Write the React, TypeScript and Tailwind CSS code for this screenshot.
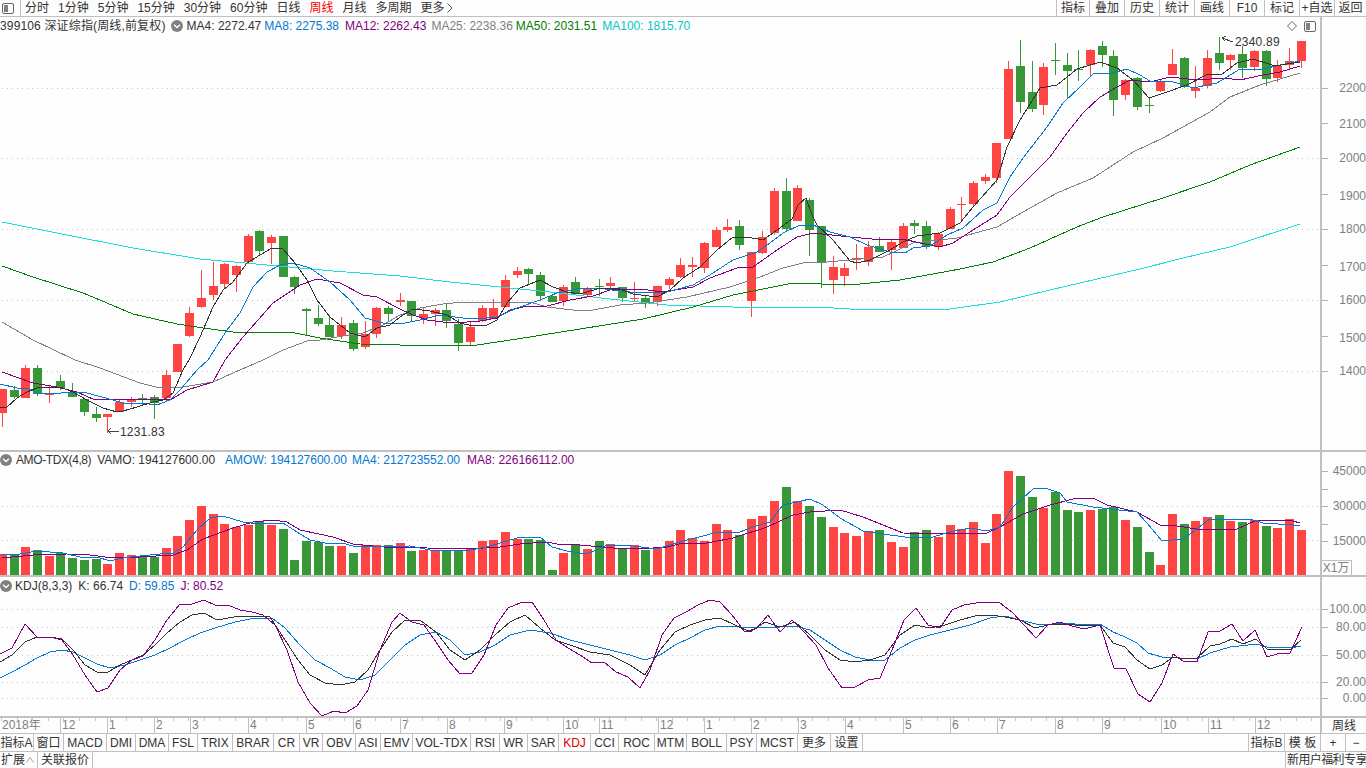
import { ReactNode } from "react";

type Pt = [number, number];
// red(1)/green(0), body top, body bottom, high, low, volume top
type Candle = [number, number, number, number, number, number];

const RED = "#ff4444";
const GREEN = "#389838";
const LINE_BLACK = "#333333";
const LINE_BLUE = "#0078d4";
const LINE_PURPLE = "#800080";
const LINE_GRAY = "#808080";
const LINE_GREEN = "#008000";
const LINE_CYAN = "#1cdcdc";

const candles: Candle[] = [
  [1, 389, 413, 389, 427, 554], [0, 390, 397, 386, 399, 554], [1, 368, 398, 365, 398, 547], [0, 368, 394, 365, 396, 550],
  [1, 393, 395, 385, 403, 556], [0, 381, 388, 375, 390, 553], [0, 392, 397, 383, 397, 558], [0, 399, 412, 399, 416, 560],
  [0, 414, 418, 407, 422, 559], [1, 414, 417, 414, 433, 564], [1, 402, 412, 400, 412, 553], [1, 399, 402, 397, 407, 555],
  [0, 398, 400, 394, 405, 556], [0, 397, 403, 395, 419, 557], [1, 375, 398, 370, 401, 548], [1, 344, 372, 344, 372, 536],
  [1, 313, 336, 307, 337, 520], [1, 298, 307, 270, 308, 506], [1, 286, 295, 262, 300, 514], [1, 264, 284, 263, 289, 524],
  [1, 266, 275, 265, 292, 527], [1, 236, 262, 234, 262, 525], [0, 231, 251, 230, 255, 521], [1, 237, 243, 235, 264, 525],
  [0, 236, 277, 236, 277, 529], [0, 277, 287, 276, 294, 560], [0, 309, 311, 308, 335, 541], [0, 318, 324, 305, 326, 542],
  [0, 325, 337, 315, 337, 546], [1, 325, 336, 317, 339, 546], [0, 323, 349, 320, 351, 553], [1, 334, 347, 321, 349, 545],
  [1, 308, 334, 307, 338, 545], [0, 308, 314, 306, 321, 545], [1, 300, 302, 293, 306, 543], [0, 301, 316, 301, 321, 551],
  [1, 314, 318, 307, 324, 550], [1, 310, 314, 308, 326, 551], [0, 310, 321, 303, 328, 551], [0, 324, 343, 319, 351, 550],
  [1, 327, 342, 322, 345, 549], [1, 308, 321, 305, 322, 541], [1, 308, 319, 299, 319, 540], [1, 280, 307, 275, 307, 532],
  [1, 271, 275, 267, 278, 539], [0, 269, 274, 268, 284, 539], [0, 275, 296, 272, 301, 540], [0, 296, 302, 294, 302, 570],
  [1, 287, 301, 285, 306, 553], [0, 282, 294, 277, 294, 544], [1, 289, 295, 287, 297, 549], [0, 286, 287, 279, 296, 541],
  [1, 283, 286, 277, 290, 544], [0, 287, 298, 287, 302, 549], [1, 298, 299, 282, 301, 545], [0, 298, 302, 296, 308, 550],
  [1, 286, 302, 286, 306, 548], [1, 279, 285, 277, 289, 541], [1, 265, 277, 258, 278, 530], [1, 265, 267, 257, 277, 538],
  [1, 243, 268, 242, 273, 541], [1, 230, 247, 227, 247, 524], [1, 227, 230, 219, 232, 530], [0, 226, 245, 220, 250, 535],
  [1, 252, 301, 252, 317, 519], [1, 237, 253, 231, 254, 516], [1, 191, 233, 188, 235, 501], [0, 191, 229, 178, 232, 487],
  [1, 188, 221, 185, 221, 501], [0, 200, 230, 198, 256, 506], [0, 226, 263, 226, 288, 517], [1, 267, 280, 256, 294, 527],
  [1, 268, 276, 263, 286, 533], [1, 258, 259, 244, 270, 536], [1, 247, 262, 241, 266, 531], [0, 246, 252, 237, 252, 530],
  [1, 242, 250, 240, 270, 542], [1, 226, 248, 223, 248, 547], [0, 223, 226, 220, 234, 532], [0, 226, 246, 221, 249, 530],
  [1, 234, 247, 232, 250, 537], [1, 209, 229, 207, 229, 525], [1, 204, 205, 197, 220, 529], [1, 183, 204, 181, 206, 522],
  [1, 177, 181, 174, 184, 543], [1, 143, 178, 143, 183, 514], [1, 69, 139, 61, 139, 471], [0, 66, 102, 40, 113, 476],
  [0, 92, 109, 61, 112, 497], [1, 67, 105, 63, 115, 508], [0, 60, 61, 43, 75, 492], [0, 65, 71, 53, 98, 510],
  [0, 69, 70, 50, 81, 512], [1, 50, 65, 49, 76, 510], [0, 46, 55, 41, 67, 509], [0, 56, 100, 50, 116, 507],
  [1, 80, 95, 79, 100, 520], [0, 78, 107, 77, 110, 527], [0, 105, 106, 98, 113, 552], [1, 81, 91, 80, 92, 565],
  [1, 64, 75, 49, 75, 514], [0, 58, 87, 57, 88, 524], [1, 88, 91, 66, 98, 521], [1, 58, 86, 50, 88, 517],
  [0, 53, 63, 37, 70, 515], [1, 55, 60, 54, 70, 521], [0, 54, 68, 46, 78, 522], [1, 51, 67, 50, 71, 520],
  [0, 51, 79, 50, 86, 526], [1, 66, 78, 60, 82, 528], [1, 61, 65, 48, 70, 519], [1, 41, 61, 41, 68, 530],
];

const ma4: Pt[] = [
  [0, 408], [7, 407], [17, 398], [27, 392], [37, 388], [50, 387], [60, 387], [73, 392], [87, 400], [103, 408], [117, 412], [123, 411], [137, 407], [153, 402], [163, 400], [173, 393], [183, 370], [189, 360],
  [200, 337], [213, 307], [223, 290], [233, 282], [247, 263], [260, 255], [272, 248], [283, 249], [295, 263], [307, 280], [317, 300], [330, 317], [350, 333], [365, 337], [377, 328], [390, 325], [400, 317],
  [413, 309], [430, 311], [447, 315], [460, 323], [473, 326], [487, 325], [497, 320], [507, 303], [520, 288], [540, 280], [553, 287], [567, 292], [580, 294], [597, 289], [617, 288], [633, 294], [657, 297], [670, 290], [683, 278], [700, 267], [717, 250], [733, 237], [747, 237], [763, 240], [777, 230], [792, 219], [798, 205], [806, 198], [812, 215], [817, 225], [833, 240], [850, 261],
  [857, 263], [870, 260], [890, 250], [903, 242], [917, 236], [940, 233], [960, 223], [973, 207], [997, 180], [1007, 147], [1020, 120], [1040, 88], [1057, 85], [1077, 69], [1100, 62], [1117, 68], [1133, 80], [1149, 98], [1167, 92], [1187, 85], [1208, 74], [1222, 74], [1237, 63], [1253, 59], [1275, 66], [1300, 62],
];
const ma8: Pt[] = [
  [0, 384], [17, 388], [28, 388], [37, 393], [50, 394], [73, 392], [87, 393], [113, 400], [123, 403], [140, 403], [157, 405], [170, 400], [180, 390], [197, 370], [208, 360], [227, 330], [240, 313], [253, 287], [267, 272], [280, 265], [293, 263], [310, 268], [330, 282], [350, 300], [365, 318], [383, 323], [400, 324],
  [420, 320], [440, 315], [463, 318], [478, 319], [497, 317], [517, 308], [540, 300], [557, 293], [577, 289], [597, 288], [620, 291], [640, 293], [667, 292], [693, 285], [713, 273], [733, 260], [757, 252], [770, 243], [783, 233], [800, 225], [813, 225], [830, 232], [850, 237],
  [867, 245], [890, 252], [905, 253], [913, 248], [930, 246], [947, 235], [963, 228], [983, 210], [997, 203], [1010, 177], [1023, 158], [1047, 127], [1063, 103], [1080, 87], [1093, 74], [1113, 73], [1127, 69], [1140, 75], [1150, 81], [1170, 81], [1193, 88], [1217, 83], [1240, 69], [1263, 69], [1280, 65], [1300, 61],
];
const ma12: Pt[] = [
  [2, 372], [33, 383], [57, 387], [77, 392], [95, 400], [127, 399], [157, 399], [170, 400], [187, 390], [213, 382], [225, 360], [243, 337], [273, 303], [300, 285], [317, 279], [340, 283], [363, 295], [377, 297], [400, 309],
  [413, 315], [427, 320], [443, 322], [467, 322], [480, 321], [497, 318], [510, 310], [527, 306], [547, 306], [570, 300], [593, 296], [613, 289], [640, 289], [663, 292], [693, 287], [710, 278], [737, 268], [753, 267], [777, 250], [797, 237], [813, 233], [850, 237],
  [883, 240], [903, 239], [920, 243], [940, 247], [953, 243], [973, 230], [997, 215], [1010, 197], [1027, 180], [1050, 157], [1067, 133], [1083, 113], [1100, 97], [1117, 87], [1130, 80], [1150, 82], [1170, 77], [1197, 80], [1223, 78], [1240, 80], [1263, 75], [1280, 72], [1300, 66],
];
const ma25: Pt[] = [
  [2, 322], [33, 340], [75, 360], [100, 368], [140, 383], [160, 388], [183, 387], [213, 382], [233, 373], [263, 360], [283, 350], [307, 341], [320, 340], [337, 337], [363, 333], [383, 325], [400, 315],
  [420, 308], [443, 304], [463, 302], [530, 302], [547, 307], [573, 310], [593, 310], [620, 305], [647, 303], [667, 300], [687, 297], [730, 287], [760, 277], [783, 268], [803, 263], [827, 262], [850, 260],
  [883, 257], [913, 243], [957, 238], [997, 227], [1023, 212], [1057, 193], [1093, 178], [1133, 152], [1163, 138], [1210, 112], [1230, 97], [1260, 85], [1300, 73],
];
const ma50: Pt[] = [
  [2, 266], [33, 277], [83, 293], [107, 303], [133, 314], [177, 324], [203, 328], [233, 332], [290, 332], [320, 338], [360, 344], [400, 345], [477, 345], [517, 339], [580, 329], [643, 319], [693, 307], [733, 295], [793, 283], [850, 285], [900, 280], [960, 269], [993, 262], [1030, 248], [1077, 227], [1103, 217], [1163, 198], [1210, 182], [1250, 165], [1300, 147],
];
const ma100: Pt[] = [
  [2, 222], [67, 235], [133, 248], [200, 259], [267, 265], [333, 271], [400, 276], [450, 282], [500, 287], [550, 292], [610, 299], [667, 305], [733, 307], [817, 307], [850, 309], [950, 309], [1000, 302], [1050, 290], [1140, 269], [1183, 258], [1230, 247], [1300, 224],
];

const volBlue: Pt[] = [
  [2, 555], [20, 554], [37, 551], [63, 553], [80, 557], [97, 557], [110, 561], [123, 558], [140, 556], [160, 554], [173, 553], [183, 547], [197, 530], [210, 518], [223, 516], [243, 522], [260, 524], [283, 523], [297, 532], [310, 540], [330, 544], [342, 543], [353, 546], [367, 547], [410, 546], [430, 550], [453, 551], [470, 550], [487, 547], [500, 543],
  [517, 538], [540, 537], [552, 547], [567, 551], [587, 554], [607, 545], [633, 546], [657, 549], [683, 541], [707, 535], [713, 533], [740, 532], [753, 527], [770, 522], [783, 505], [810, 499], [823, 505], [840, 518], [863, 531], [890, 535], [913, 538], [933, 537], [950, 532],
  [970, 528], [987, 531], [1000, 527], [1013, 507], [1033, 489], [1045, 488], [1060, 493], [1067, 502], [1093, 507], [1137, 512], [1147, 523], [1162, 541], [1183, 539], [1210, 519], [1250, 519], [1263, 523], [1293, 525], [1300, 526],
];
const volPurple: Pt[] = [
  [2, 558], [33, 555], [67, 554], [90, 555], [113, 558], [140, 557], [173, 555], [187, 550], [203, 539], [233, 528], [253, 522], [273, 520], [287, 522], [300, 530], [333, 537], [353, 544], [383, 547], [427, 548], [467, 549], [500, 547],
  [520, 544], [547, 542], [557, 544], [580, 545], [613, 548], [640, 549], [667, 547], [683, 543], [707, 543], [733, 538], [767, 527], [793, 515], [810, 512], [840, 510], [863, 517], [903, 533], [950, 534],
  [987, 533], [1000, 527], [1023, 514], [1050, 505], [1077, 498], [1093, 498], [1107, 505], [1137, 512], [1160, 525], [1177, 526], [1203, 530], [1237, 529], [1257, 520], [1293, 521], [1300, 523],
];

const kdjJ: Pt[] = [
  [0, 654], [12, 648], [25, 624], [37, 637], [50, 637], [62, 640], [73, 655], [85, 675], [97, 692], [108, 688], [120, 670], [132, 660], [143, 656], [155, 640], [167, 620], [180, 604], [192, 604], [204, 600], [217, 606], [228, 605], [240, 610], [252, 612], [263, 615], [275, 625], [287, 650], [298, 682], [310, 703], [322, 716], [334, 711], [345, 713], [357, 706], [368, 690], [380, 650], [392, 622], [400, 613], [412, 622], [424, 625], [436, 642], [448, 660], [460, 674], [472, 673], [484, 655], [496, 625], [508, 608], [520, 603], [532, 602], [544, 620], [556, 640], [568, 648], [580, 655], [592, 663], [604, 662], [616, 672], [628, 677], [640, 688], [650, 670], [662, 635], [674, 618], [686, 612], [698, 605], [710, 600], [720, 602], [732, 615], [745, 632], [757, 628], [768, 615], [780, 632], [792, 620], [804, 632], [816, 645], [828, 668], [842, 688], [855, 687], [868, 680], [880, 678], [892, 650], [904, 620], [916, 608], [928, 625], [940, 628], [952, 610], [964, 605], [976, 603], [988, 602], [1000, 603], [1012, 612], [1024, 625], [1036, 638], [1048, 625], [1060, 622], [1072, 626], [1084, 629], [1100, 625],
  [1114, 668], [1126, 669], [1138, 694], [1150, 702], [1162, 683], [1173, 654], [1183, 661], [1197, 662], [1208, 632], [1220, 631], [1232, 624], [1243, 641], [1255, 630], [1267, 657], [1277, 654], [1290, 653], [1302, 627],
];
const kdjK: Pt[] = [
  [0, 662], [12, 655], [25, 642], [37, 637], [50, 637], [62, 639], [73, 650], [85, 665], [97, 672], [108, 672], [120, 665], [132, 660], [143, 655], [155, 645], [167, 633], [180, 622], [192, 615], [204, 613], [217, 620], [240, 616], [270, 617], [285, 640], [298, 660], [310, 675], [325, 683], [340, 685], [355, 682], [368, 670], [380, 650], [392, 632], [405, 620], [420, 620], [436, 632], [450, 650], [465, 660], [480, 650], [495, 635], [510, 622], [525, 615], [540, 628], [555, 640], [570, 645], [590, 652], [610, 655], [630, 665], [645, 675], [660, 650], [675, 632], [690, 625], [705, 620], [720, 618], [735, 625], [750, 632], [765, 622], [780, 627], [795, 622], [810, 635], [825, 650], [840, 660], [855, 662], [870, 660], [885, 655], [900, 635], [915, 625], [930, 628], [945, 625], [960, 620], [975, 616], [990, 615], [1005, 617], [1020, 620], [1035, 628], [1048, 625], [1065, 624], [1085, 626], [1100, 625],
  [1113, 643], [1125, 647], [1137, 660], [1150, 669], [1162, 665], [1173, 657], [1183, 659], [1197, 658], [1210, 646], [1220, 644], [1232, 639], [1243, 644], [1256, 639], [1267, 649], [1290, 650], [1301, 640],
];
const kdjD: Pt[] = [
  [0, 678], [12, 672], [25, 665], [37, 658], [50, 652], [62, 650], [73, 652], [85, 658], [97, 664], [110, 668], [125, 665], [140, 660], [155, 655], [170, 648], [185, 640], [200, 633], [215, 628], [235, 622], [255, 618], [272, 618], [285, 628], [300, 645], [315, 660], [330, 668], [345, 677], [360, 680], [375, 675], [390, 660], [405, 645], [420, 635], [436, 632], [450, 640], [465, 655], [480, 652], [495, 645], [510, 635], [530, 630], [550, 633], [570, 640], [590, 645], [610, 650], [630, 655], [645, 660], [660, 655], [675, 645], [690, 638], [705, 630], [720, 626], [740, 627], [760, 627], [780, 627], [795, 626], [810, 630], [825, 640], [840, 650], [855, 657], [870, 660], [885, 660], [900, 648], [915, 640], [930, 635], [950, 630], [970, 625], [990, 618], [1005, 616], [1020, 620], [1040, 625], [1065, 623], [1085, 625], [1100, 624],
  [1113, 632], [1125, 637], [1137, 643], [1148, 653], [1162, 657], [1197, 659], [1210, 653], [1230, 647], [1257, 644], [1267, 647], [1290, 648], [1301, 646],
];

const mainGrid = [88, 158, 229, 300, 371];
const mainAxis = [
  { label: "2200", y: 88, tick: 88 }, { label: "2100", y: 124, tick: 123 }, { label: "2000", y: 158, tick: 158 },
  { label: "1900", y: 196, tick: 194 }, { label: "1800", y: 229, tick: 229 }, { label: "1700", y: 267, tick: 265 },
  { label: "1600", y: 300, tick: 300 }, { label: "1500", y: 338, tick: 336 }, { label: "1400", y: 371, tick: 371 },
];
const volAxis = [
  { label: "45000", y: 471, tick: 471 }, { label: "", y: 489, tick: 489 }, { label: "30000", y: 506, tick: 506 },
  { label: "", y: 524, tick: 524 }, { label: "15000", y: 541, tick: 541 },
];
const kdjAxis = [
  { label: "100.00", y: 609, tick: 609 }, { label: "80.00", y: 627, tick: 627 }, { label: "50.00", y: 655, tick: 655 },
  { label: "20.00", y: 682, tick: 682 }, { label: "0.00", y: 698, tick: 698 },
];

const periods = ["分时", "1分钟", "5分钟", "15分钟", "30分钟", "60分钟", "日线", "周线", "月线", "多周期"];
const rightTools = [
  { label: "指标", w: "w-[33px]" }, { label: "叠加", w: "w-[35px]" }, { label: "历史", w: "w-[35px]" }, { label: "统计", w: "w-[35px]" },
  { label: "画线", w: "w-[35px]" }, { label: "F10", w: "w-[35px]" }, { label: "标记", w: "w-[35px]" }, { label: "+自选", w: "w-[35px]" }, { label: "返回", w: "w-[32px]" },
];
const tabs = [
  { label: "指标A", w: "w-[34px]" }, { label: "窗口", w: "w-[30px]" }, { label: "MACD", w: "w-[43px]" }, { label: "DMI", w: "w-[29px]" },
  { label: "DMA", w: "w-[33px]" }, { label: "FSL", w: "w-[29px]" }, { label: "TRIX", w: "w-[35px]" }, { label: "BRAR", w: "w-[41px]" },
  { label: "CR", w: "w-[26px]" }, { label: "VR", w: "w-[23px]" }, { label: "OBV", w: "w-[33px]" }, { label: "ASI", w: "w-[25px]" },
  { label: "EMV", w: "w-[32px]" }, { label: "VOL-TDX", w: "w-[58px]" }, { label: "RSI", w: "w-[29px]" }, { label: "WR", w: "w-[28px]" },
  { label: "SAR", w: "w-[31px]" }, { label: "KDJ", w: "w-[32px]" }, { label: "CCI", w: "w-[28px]" }, { label: "ROC", w: "w-[36px]" },
  { label: "MTM", w: "w-[32px]" }, { label: "BOLL", w: "w-[40px]" }, { label: "PSY", w: "w-[30px]" }, { label: "MCST", w: "w-[41px]" },
  { label: "更多", w: "w-[33px]" }, { label: "设置", w: "w-[32px]" },
];
const months = [
  { label: "2018年", x: 0 }, { label: "12", x: 60 }, { label: "1", x: 107 }, { label: "2", x: 154 }, { label: "3", x: 190 }, { label: "4", x: 248 },
  { label: "5", x: 306 }, { label: "6", x: 353 }, { label: "7", x: 400 }, { label: "8", x: 447 }, { label: "9", x: 504 }, { label: "10", x: 563 },
  { label: "11", x: 599 }, { label: "12", x: 658 }, { label: "1", x: 704 }, { label: "2", x: 751 }, { label: "3", x: 798 }, { label: "4", x: 845 },
  { label: "5", x: 903 }, { label: "6", x: 950 }, { label: "7", x: 997 }, { label: "8", x: 1055 }, { label: "9", x: 1102 }, { label: "10", x: 1161 },
  { label: "11", x: 1208 }, { label: "12", x: 1255 }, { label: "", x: 1320 },
];

const candleLeft = (i: number) => Math.floor(11.7 * i - 1.6);
const toPoints = (pts: Pt[]) => pts.map((p) => p.join(",")).join(" ");

function Curve({ pts, color }: { pts: Pt[]; color: string }) {
  return <polyline points={toPoints(pts)} fill="none" stroke={color} strokeWidth={1} />;
}

function GridLine({ y }: { y: number }) {
  return <line x1={2} x2={1320} y1={y + 0.5} y2={y + 0.5} stroke="#c4c4c4" strokeDasharray="1 4" />;
}

function CircleChevron() {
  return (
    <svg viewBox="0 0 12 12" className="h-3 w-3 shrink-0">
      <circle cx="6" cy="6" r="6" fill="#808080" />
      <path d="M3 4.8 L6 7.6 L9 4.8" fill="none" stroke="#fff" strokeWidth="1.4" />
    </svg>
  );
}

function PanelIcon({ className }: { className: string }) {
  return (
    <svg viewBox="0 0 12 11" className={className}>
      <rect x="0.5" y="0.5" width="11" height="10" rx="1.5" fill="#fdfdfd" stroke="#666" />
      <rect x="2" y="2" width="4" height="7" fill="#808080" />
    </svg>
  );
}

function Axis({ items, offset }: { items: { label: string; y: number; tick: number }[]; offset: number }) {
  return (
    <div className="relative w-[46px] shrink-0 border-l-2 border-[#c0c0c0]">
      {items.map((a) => (
        <div key={a.tick}>
          <div className="absolute left-0 h-px w-[6px] bg-[#b0b0b0]" style={{ top: a.tick - offset }} />
          {a.label && (
            <span className="absolute right-0 text-[12px] leading-[14px] text-[#808080]" style={{ top: a.y - offset - 7 }}>
              {a.label}
            </span>
          )}
        </div>
      ))}
    </div>
  );
}

function ValueRow({ children, className }: { children: ReactNode; className: string }) {
  return <div className={`relative flex h-[18px] items-center whitespace-nowrap text-[12px] ${className}`}>{children}</div>;
}

function ChartSvg({ top, height, children }: { top: number; height: number; children: ReactNode }) {
  return (
    <svg viewBox={`0 ${top} 1320 ${height}`} shapeRendering="crispEdges" className="absolute left-0 top-0 block h-full w-full">
      {children}
    </svg>
  );
}

export default function App() {
  return (
    <div className="flex h-[768px] w-[1366px] flex-col overflow-hidden bg-[#fdfdfd] font-['Liberation_Sans','Noto_Sans_CJK_SC',sans-serif] text-[12px] text-[#333]">
      {/* Top toolbar */}
      <div className="flex h-[17px] shrink-0 items-stretch justify-between border-b border-[#c0c0c0]">
        <div className="flex items-stretch">
          <div className="flex w-[21px] items-center border-r border-[#c0c0c0] pl-[2px]">
            <PanelIcon className="h-[11px] w-[12px]" />
          </div>
          <div className="flex items-center gap-[9px] pl-[4px]">
            {periods.map((p) => (
              <span key={p} className={p === "周线" ? "text-[#ff0000]" : ""}>
                {p}
              </span>
            ))}
            <span className="flex items-center gap-[2px]">
              更多
              <svg viewBox="0 0 6 10" className="h-[10px] w-[6px]">
                <path d="M0.5 0.5 L5 5 L0.5 9.5" fill="none" stroke="#555" />
              </svg>
            </span>
          </div>
        </div>
        <div className="flex items-stretch">
          {rightTools.map((t) => (
            <div key={t.label} className={`flex items-center justify-center border-l border-[#c0c0c0] ${t.w}`}>
              {t.label}
            </div>
          ))}
        </div>
      </div>

      {/* Price panel */}
      <div className="flex h-[435px] shrink-0 border-b-2 border-[#c0c0c0]">
        <div className="relative w-[1320px] shrink-0">
          <ChartSvg top={17} height={433}>
            {mainGrid.map((y) => (
              <GridLine key={y} y={y} />
            ))}
            {candles.map((c, i) => {
              const left = candleLeft(i);
              const color = c[0] ? RED : GREEN;
              return (
                <g key={i} fill={color}>
                  <rect x={left + 4} y={c[3]} width={1} height={c[4] - c[3]} />
                  <rect x={left} y={c[1]} width={9} height={c[2] - c[1]} />
                </g>
              );
            })}
            <Curve pts={ma100} color={LINE_CYAN} />
            <Curve pts={ma50} color={LINE_GREEN} />
            <Curve pts={ma25} color={LINE_GRAY} />
            <Curve pts={ma12} color={LINE_PURPLE} />
            <Curve pts={ma8} color={LINE_BLUE} />
            <Curve pts={ma4} color={LINE_BLACK} />
            <path d="M1233 42 L1222 38 M1222 38 L1226 36 M1222 38 L1225 41" fill="none" stroke="#444" />
            <path d="M119 431 L108 431 M108 431 L111 428 M108 431 L111 434" fill="none" stroke="#444" />
          </ChartSvg>
          <ValueRow className="gap-[6px]">
            <span className="tracking-[0.15px]">399106 深证综指(周线,前复权)</span>
            <span className="-ml-[1px]">
              <CircleChevron />
            </span>
            <span className="-ml-[2px]">MA4: 2272.47</span>
            <span className="-ml-[3px] text-[#0078d4]">MA8: 2275.38</span>
            <span className="text-[#800080]">MA12: 2262.43</span>
            <span className="-ml-[1px] text-[#808080]">MA25: 2238.36</span>
            <span className="-ml-[3px] text-[#008000]">MA50: 2031.51</span>
            <span className="-ml-[1px] text-[#00c8c8]">MA100: 1815.70</span>
          </ValueRow>
          <svg viewBox="0 0 10 10" className="absolute right-[23px] top-[4px] h-[10px] w-[10px]">
            <path d="M5 0.5 L9.5 5 L5 9.5 L0.5 5 Z" fill="none" stroke="#666" />
          </svg>
          <PanelIcon className="absolute right-[4px] top-[4px] h-[11px] w-[12px]" />
          <span className="absolute left-[1235px] top-[18px] text-[12px] leading-[14px] tracking-[0.2px]">2340.89</span>
          <span className="absolute left-[120px] top-[408px] text-[12px] leading-[14px] tracking-[0.2px]">1231.83</span>
        </div>
        <Axis items={mainAxis} offset={17} />
      </div>

      {/* Amount panel */}
      <div className="flex h-[125px] shrink-0 border-b-2 border-[#c0c0c0]">
        <div className="relative w-[1320px] shrink-0">
          <ChartSvg top={452} height={123}>
            <GridLine y={506} />
            <GridLine y={540} />
            {candles.map((c, i) => (
              <rect key={i} x={candleLeft(i)} y={c[5]} width={9} height={576 - c[5]} fill={c[0] ? RED : GREEN} />
            ))}
            <Curve pts={volPurple} color={LINE_PURPLE} />
            <Curve pts={volBlue} color={LINE_BLUE} />
          </ChartSvg>
          <ValueRow className="-mt-[1px] gap-[5px]">
            <CircleChevron />
            <span className="-ml-[1px] tracking-[-0.4px]">AMO-TDX(4,8)</span>
            <span className="ml-[1px]">VAMO: 194127600.00</span>
            <span className="ml-[5px] text-[#0078d4]">AMOW: 194127600.00</span>
            <span className="text-[#0078d4]">MA4: 212723552.00</span>
            <span className="ml-[2px] text-[#800080]">MA8: 226166112.00</span>
          </ValueRow>
        </div>
        <div className="relative flex w-[46px] shrink-0">
          <Axis items={volAxis} offset={452} />
          <div className="absolute bottom-0 left-[1px] flex h-[15px] w-[31px] items-center justify-center border-r border-t border-[#c0c0c0] text-[#808080]">
            X1万
          </div>
        </div>
      </div>

      {/* KDJ panel */}
      <div className="flex h-[141px] shrink-0 border-b-2 border-[#c0c0c0]">
        <div className="relative w-[1320px] shrink-0">
          <ChartSvg top={577} height={139}>
            {[609, 627, 655, 682, 698].map((y) => (
              <GridLine key={y} y={y} />
            ))}
            <Curve pts={kdjD} color={LINE_BLUE} />
            <Curve pts={kdjK} color={LINE_BLACK} />
            <Curve pts={kdjJ} color={LINE_PURPLE} />
          </ChartSvg>
          <ValueRow className="gap-[6px]">
            <CircleChevron />
            <span className="-ml-[3px]">KDJ(8,3,3)</span>
            <span>K: 66.74</span>
            <span className="text-[#0078d4]">D: 59.85</span>
            <span className="text-[#800080]">J: 80.52</span>
          </ValueRow>
        </div>
        <Axis items={kdjAxis} offset={577} />
      </div>

      {/* Date axis */}
      <div className="flex h-[16px] shrink-0 border-b border-[#c0c0c0]">
        <div className="relative flex w-[1320px] shrink-0 text-[#808080]">
          {months.slice(0, -1).map((m, i) => (
            <div
              key={m.x}
              className={`h-full overflow-hidden pl-[1px] leading-[15px] ${i > 0 ? "border-l border-[#c0c0c0]" : "pl-[2px]"}`}
              style={{ width: months[i + 1].x - m.x }}
            >
              {m.label}
            </div>
          ))}
          <svg viewBox="0 0 1320 3" className="absolute left-0 top-0 h-[3px] w-[1320px]" shapeRendering="crispEdges">
            {Array.from({ length: 85 }, (_, i) => (
              <line key={i} x1={i * 15.6 + 1.5} x2={i * 15.6 + 1.5} y1={0} y2={3} stroke="#c8c8c8" />
            ))}
          </svg>
        </div>
        <div className="flex flex-1 items-center justify-center border-l-2 border-[#c0c0c0]">周线</div>
      </div>

      {/* Indicator tabs */}
      <div className="flex h-[18px] shrink-0 items-stretch border-b border-[#c0c0c0]">
        {tabs.map((t) => (
          <div
            key={t.label}
            className={`flex items-center justify-center whitespace-nowrap border-r border-[#c0c0c0] ${t.w} ${t.label === "KDJ" ? "text-[#e00000]" : ""}`}
          >
            {t.label}
          </div>
        ))}
        <div className="ml-auto flex w-[36px] items-center justify-center whitespace-nowrap border-l border-[#c0c0c0]">指标B</div>
        <div className="flex w-[36px] items-center justify-center border-l border-[#c0c0c0]">模 板</div>
        <div className="flex w-[25px] items-center justify-center border-l border-[#c0c0c0]">+</div>
        <div className="flex w-[21px] items-center justify-center border-l border-[#c0c0c0]">−</div>
      </div>

      {/* Status bar */}
      <div className="flex h-[16px] shrink-0 items-stretch justify-between">
        <div className="flex items-stretch">
          <div className="flex w-[38px] items-center border-r border-[#c0c0c0] pl-[1px]">
            扩展
            <svg viewBox="0 0 8 6" className="ml-[1px] h-[6px] w-[8px]">
              <path d="M0.5 5.5 L4 0.5 L7.5 5.5" fill="none" stroke="#a0a0a0" />
            </svg>
          </div>
          <div className="flex w-[55px] items-center justify-center border-r border-[#c0c0c0]">关联报价</div>
        </div>
        <div className="flex w-[81px] items-center whitespace-nowrap border-l border-[#c0c0c0] pl-[1px] tracking-[-0.6px]">新用户福利专享</div>
      </div>
    </div>
  );
}
